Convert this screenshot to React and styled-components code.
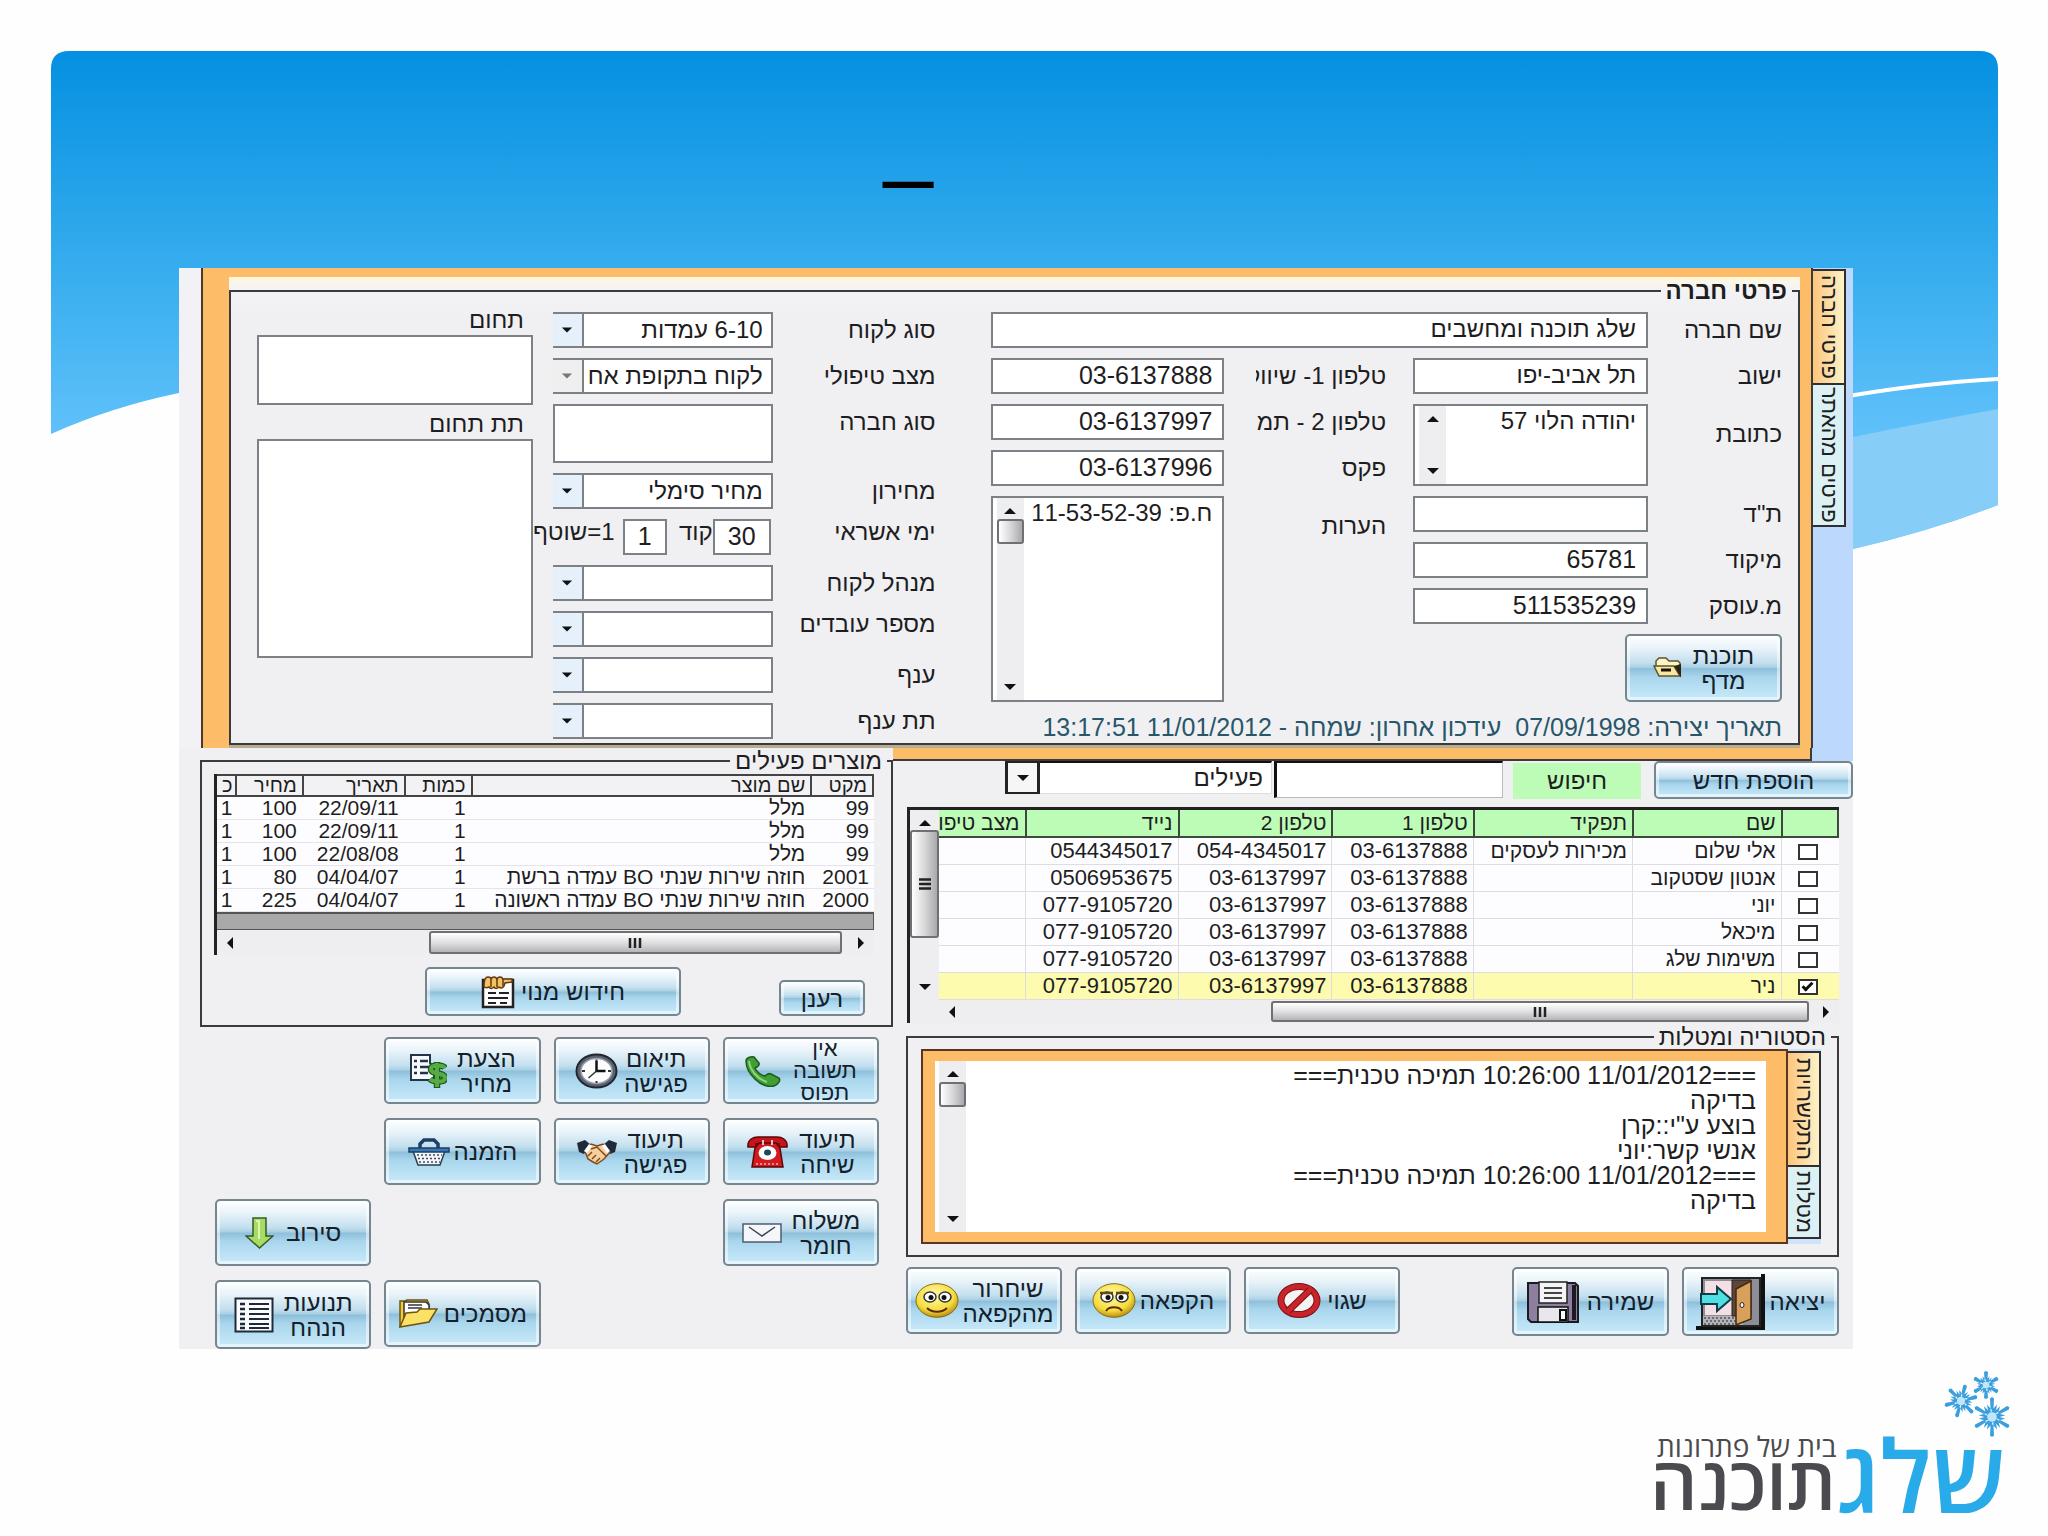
import React from "react";
import styled, { createGlobalStyle, css } from "styled-components";

const ink = "#1d1d22";
const line = "#7c8186";
const orange = "#fdbd68";
const face = "#f0f0f2";
const sans = '"Liberation Sans", Arial, sans-serif';

const GlobalStyle = createGlobalStyle`
  *, *::before, *::after { box-sizing: border-box; }
  body { margin: 0; background: #fefefe; color: ${ink}; font-family: ${sans}; }
  button, input, select, textarea { font: inherit; color: inherit; margin: 0; }
`;

/* ---------- slide ---------- */

const Slide = styled.div`
  display: grid;
  grid-template-columns: minmax(0, 1fr);
  min-height: 100vh;
`;

const Backdrop = styled.svg`
  grid-area: 1 / 1;
  width: calc(100% - 101px);
  height: 498px;
  margin: 51px 50px 0 51px;
`;

const Content = styled.div`
  grid-area: 1 / 1;
  display: flex;
  flex-direction: column;
`;

const Title = styled.h1`
  margin: 0;
  height: 268px;
  padding: 124px 232px 0 0;
  font-size: 92px;
  line-height: 104px;
  font-weight: 400;
  color: #000;
  text-align: center;
`;

const AppWindow = styled.main`
  margin: 0 195px 0 179px;
  background: ${face};
  font-size: 24px;
`;

/* ---------- shared controls ---------- */

const boxed = css`
  width: 100%;
  height: 100%;
  border: 2px solid ${line};
  border-radius: 0;
  background: #fff;
  outline: 0;
`;

const TextBox = styled.input`
  ${boxed}
  min-width: 0;
  padding: 0 10px 2px;
  font-size: ${(p) => (p.$digits ? 25 : 24)}px;
  text-align: ${(p) => p.$align || "start"};
`;

const TextArea = styled.textarea`
  ${boxed}
  display: block;
  min-width: 0;
  padding: 2px 10px 2px 0;
  font-size: ${(p) => (p.$digits ? 25 : 24)}px;
  line-height: ${(p) => p.$leading || 26}px;
  white-space: pre;
  resize: none;
  overflow: hidden;
  ${(p) => p.$bare && "border: 0;"}
`;

const Label = styled.label`
  display: block;
  min-width: 0;
  overflow: hidden;
  white-space: nowrap;
  line-height: ${(p) => (p.$snug ? 26 : 36)}px;
  padding-top: ${(p) => (p.$tall ? 12 : 0)}px;
  ${(p) => p.$inset && "margin: 0 27px 0 32px;"}
`;

const Cell = styled.div`
  grid-row: span ${(p) => p.$rows || 1};
  grid-column: span ${(p) => p.$cols || 1};
  min-width: 0;
  display: grid;
`;

const ComboFrame = styled.div`
  display: grid;
  grid-template-columns: minmax(0, 1fr);
  height: 100%;
`;

const ComboSelect = styled.select`
  ${boxed}
  grid-area: 1 / 1;
  appearance: none;
  border-left: 0;
  padding: 0 8px 2px 32px;
  opacity: 1;
`;

const ComboArrow = styled.span`
  grid-area: 1 / 1;
  justify-self: end;
  width: 31px;
  display: flex;
  align-items: center;
  justify-content: center;
  border: 2px solid ${line};
  border-left: 0;
  background: ${(p) => (p.$dim ? "#efeff0" : "#e6f0fa")};
  color: ${(p) => (p.$dim ? "#777" : "#111")};
  pointer-events: none;
`;

const FilterArrow = styled(ComboArrow)`
  width: 35px;
  border: solid #222;
  border-width: 2px 3px;
  background: #f6f6f6;
`;

const FilterSelect = styled(ComboSelect)`
  border: solid #ddd;
  border-width: 2px 1px 1px;
  border-top-color: #111;
  padding-left: 38px;
`;

const Arrow = ({ dir = "down", size = 14 }) => {
  const pts = { down: "1,4 13,4 7,10", up: "1,10 13,10 7,4", left: "10,1 10,13 4,7", right: "4,1 4,13 10,7" }[dir];
  return (
    <svg width={size} height={size} viewBox="0 0 14 14" aria-hidden="true">
      <polygon points={pts} fill="currentColor" />
    </svg>
  );
};

const Combo = ({ id, value, dim }) => (
  <ComboFrame>
    <ComboSelect id={id} disabled={dim} defaultValue={value}>
      <option>{value}</option>
    </ComboSelect>
    <ComboArrow $dim={dim}>
      <Arrow size={12} />
    </ComboArrow>
  </ComboFrame>
);

const GlossButton = styled.button`
  display: flex;
  align-items: center;
  justify-content: center;
  gap: ${(p) => p.$gap || 6}px;
  width: ${(p) => (p.$w ? p.$w + "px" : "100%")};
  height: ${(p) => (p.$h ? p.$h + "px" : "100%")};
  padding: 0 4px;
  overflow: hidden;
  border: 2px solid #76868f;
  border-radius: 5px;
  background: linear-gradient(#fdfeff 0%, #eaf4fa 18%, #c3dfee 42%, #a9d0e5 49%, #8ebfda 51%, #a9d6ed 64%, #c9eafa 100%);
  box-shadow: inset 0 0 0 3px rgba(255, 255, 255, 0.5);
  font-size: ${(p) => (p.$tight ? 22 : 24)}px;
  line-height: ${(p) => (p.$tight ? 22 : 25)}px;
  white-space: pre-line;
  color: #14202a;
  svg { flex: none; }
`;

const GroupBox = styled.fieldset`
  min-width: 0;
  margin: 0;
  border: 2px solid #3b3b3d;
  padding: 0;
`;

const GroupTitle = styled.legend`
  margin-inline-start: ${(p) => p.$start || 6}px;
  padding: 0 5px;
  font-size: 24px;
  font-weight: ${(p) => (p.$bold ? 700 : 400)};
  line-height: ${(p) => p.$leading || 26}px;
`;

/* ---------- scroll bars ---------- */

const Track = styled.div`
  display: flex;
  flex-direction: ${(p) => (p.$vertical ? "column" : "row")};
  direction: ltr;
  align-items: center;
  min-width: 0;
  padding: ${(p) => (p.$vertical ? "6px 0" : "0 6px")};
  background: #eeeef0;
  color: #111;
  svg { flex: none; display: block; }
`;

const Gap = styled.i`
  flex: ${(p) => p.$grow} 1 0;
`;

const Thumb = styled.i`
  display: flex;
  align-items: center;
  justify-content: center;
  border: 2px solid #707074;
  border-radius: 3px;
  ${(p) =>
    p.$vertical
      ? css`
          width: 100%;
          flex: ${p.$grow} 1 0;
          background: linear-gradient(90deg, #fff, #d8d8da 50%, #a9a9ad);
        `
      : css`
          height: calc(100% - 2px);
          flex: ${p.$grow} 1 0;
          background: linear-gradient(#fff, #e2e2e4 48%, #b5b5b8);
        `}
`;

const Grip = ({ vertical }) => (
  <svg width="14" height="12" viewBox="0 0 14 12" aria-hidden="true">
    <path d={vertical ? "M1 1.500h12M1 6h12M1 10.500h12" : "M2 1v10M7 1v10M12 1v10"} stroke="#222" strokeWidth="2.500" />
  </svg>
);

const ScrollBar = ({ vertical, before, size, after, grip }) => (
  <Track $vertical={vertical} aria-hidden="true">
    <Arrow dir={vertical ? "up" : "left"} />
    <Gap $grow={before} />
    {size > 0 && (
      <Thumb $vertical={vertical} $grow={size}>
        {grip && <Grip vertical={vertical} />}
      </Thumb>
    )}
    <Gap $grow={after} />
    <Arrow dir={vertical ? "down" : "right"} />
  </Track>
);

const ScrollField = styled.div`
  display: grid;
  grid-template-columns: minmax(0, 1fr) 27px;
  padding-left: 4px;
  border: ${(p) => (p.$bare ? 0 : 2)}px solid ${line};
  background: #fff;
`;

/* ---------- company panel ---------- */

const CompanyPanel = styled.section`
  display: flex;
  background: #f2f1f6;
  padding-left: 22px;
`;

const TabRail = styled.div`
  flex: none;
  width: ${(p) => p.$w}px;
  display: flex;
  flex-direction: column;
  padding: ${(p) => p.$pad};
  background: ${(p) => p.$bg};
  ${(p) => p.$ruled && "border-left: 2px solid #3b3b3d;"}
`;

const Tab = styled.button`
  writing-mode: vertical-rl;
  direction: rtl;
  display: flex;
  align-items: center;
  justify-content: center;
  height: ${(p) => p.$h}px;
  width: 100%;
  padding: 0;
  border: solid #2f2f33;
  border-width: 2px 2px 0 0;
  background: ${(p) => (p.$on ? "linear-gradient(90deg, #fcc57c, #fdf3c8)" : "#dcf1f3")};
  font-size: 22px;
  line-height: 26px;
  &:last-child { border-bottom-width: 2px; }
`;

const OrangeFrame = styled.div`
  flex: 1;
  min-width: 0;
  padding: 9px 11px 0 26px;
  border-left: 2px solid #4a3a2a;
  background: ${orange};
`;

const Sheet = styled.div`
  background: linear-gradient(#fff8dc, #f3f3f6 12px, ${face} 40px);
  box-shadow: 0 3px 0 #b9ad8f;
  margin-bottom: 3px;
`;

const CompanyColumns = styled.div`
  display: grid;
  grid-template-columns: minmax(0, 792fr) minmax(0, 438fr) minmax(0, 296fr);
  padding: 0 16px 0 26px;
`;

const ContactBlock = styled.div`
  padding-top: 7px;
`;

const ContactGrid = styled.div`
  display: grid;
  grid-template-columns: minmax(0, 134fr) minmax(0, 235fr) minmax(0, 189fr) minmax(0, 234fr);
  grid-template-rows: repeat(7, 36px) 68px;
  row-gap: 10px;
`;

const Status = styled.p`
  margin: 9px 0 0;
  font-size: 25px;
  line-height: 32px;
  color: #28566a;
  white-space: pre;
`;

const DetailGrid = styled.div`
  display: grid;
  grid-template-columns: minmax(0, 163fr) minmax(0, 220fr);
  grid-template-rows: 36px 36px 59px repeat(6, 36px);
  row-gap: 10px;
  padding-top: 7px;
  margin-inline-start: 55px;
`;

const CreditRow = styled.div`
  display: flex;
  gap: 0;
  padding-inline-start: 2px;
  white-space: nowrap;
`;

const SmallBox = styled.div`
  flex: none;
  width: ${(p) => p.$w}px;
  margin-inline-end: ${(p) => p.$after || 0}px;
`;

const CreditLabel = styled(Label)`
  flex: none;
  width: ${(p) => (p.$w ? p.$w + "px" : "auto")};
`;

const DomainColumn = styled.div`
  margin-inline-start: 20px;
  label { line-height: 30px; padding-inline-start: 9px; }
`;

const DomainBox = styled.div`
  height: ${(p) => p.$h}px;
  margin-bottom: 4px;
`;

/* ---------- lower body ---------- */

const Body = styled.div`
  display: grid;
  grid-template-columns: minmax(0, 960fr) minmax(0, 714fr);
`;

const Strip = styled.div`
  display: flex;
  height: 13px;
  background: #bcd9fd;
  &::before {
    content: "";
    width: 41px;
  }
  &::after {
    content: "";
    flex: 1;
    background: ${orange};
    border: solid #3b3b3d;
    border-width: 0 2px 2px 0;
  }
`;

const FilterRow = styled.div`
  display: flex;
  height: 38px;
`;

const SearchButton = styled.button`
  width: 128px;
  height: 36px;
  margin: 2px 13px 0 10px;
  border: 0;
  background: #bdfcb6;
  font-size: 24px;
`;

const SearchBox = styled.input`
  flex: none;
  width: 229px;
  height: 37px;
  margin-left: 2px;
  border: solid #bbb;
  border-width: 2px 1px 1px 3px;
  border-color: #111 #bbb #bbb #111;
  background: #fff;
`;

const FilterCombo = styled.div`
  width: 267px;
  height: 33px;
`;

const PeopleFrame = styled.div`
  display: grid;
  grid-template-columns: minmax(0, 1fr) 29px;
  grid-template-rows: auto 23px;
  margin: 8px 14px 0;
  border-top: 3px solid #222;
  border-left: 3px solid #222;
  background: #eeeef0;
`;

const PeopleTable = styled.table`
  width: 100%;
  table-layout: fixed;
  border-collapse: separate;
  border-spacing: 0;
  font-size: 22px;
  th, td {
    padding: 0 5px 0 0;
    text-align: start;
    font-weight: 400;
    white-space: nowrap;
    overflow: hidden;
  }
  th {
    height: 28px;
    line-height: 26px;
    font-size: 21px;
    background: #bdfcb6;
    border: solid #3c4a3c;
    border-width: 0 0 2px 2px;
  }
  th:last-child, td:last-child { border-left: 0; }
  th:first-child { border-right: 2px solid #3c4a3c; }
  td {
    height: 27px;
    line-height: 26px;
    border: solid #dcdce2;
    border-width: 0 0 1px 1px;
    background: #fdfdff;
  }
  td:nth-child(2), td:nth-child(3) { font-size: 21px; }
  tr[aria-selected="true"] td { background: #fcfbae; }
`;

const PickCell = styled.td`
  text-align: center !important;
`;

const Tick = styled.input`
  appearance: none;
  display: inline-grid;
  place-items: center;
  width: 20px;
  height: 16px;
  border: 2px solid #333;
  background: #fff;
  vertical-align: middle;
  &:checked::before {
    content: "";
    width: 11px;
    height: 6px;
    border: solid #111;
    border-width: 0 0 3px 3px;
    transform: rotate(-45deg) translate(1px, -1px);
  }
`;

const HistoryGroup = styled(GroupBox)`
  margin: 2px 14px 0 13px;
`;

const HistoryRow = styled.div`
  display: flex;
  padding: 0 16px 11px 13px;
`;

const HistoryFrame = styled.div`
  flex: 1;
  min-width: 0;
  display: grid;
  height: 195px;
  padding: 10px 20px 10px 12px;
  border: 2px solid #5a3524;
  background: ${orange};
`;

const BottomButtons = styled.div`
  display: flex;
  gap: 13px;
  margin: 10px 14px 11px 13px;
  height: 69px;
`;

const Push = styled.span`
  flex: 1;
`;

const ProductsGroup = styled(GroupBox)`
  margin-left: 21px;
`;

const ProductsFrame = styled.div`
  margin: 0 17px 0 12px;
  border-left: 3px solid #222;
`;

const ProductsTable = styled.table`
  width: 100%;
  table-layout: fixed;
  border-collapse: separate;
  border-spacing: 0;
  font-size: 21px;
  th, td {
    padding: 0 5px;
    text-align: start;
    font-weight: 400;
    white-space: nowrap;
    overflow: hidden;
  }
  th {
    height: 23px;
    line-height: 19px;
    font-size: 20px;
    background: #f2f2f4;
    border: solid #444;
    border-width: 2px 0 2px 2px;
  }
  th:first-child { border-right: 2px solid #444; }
  th:last-child { border-left: 0; }
  td {
    height: 23px;
    line-height: 22px;
    background: #fdfdff;
    border-bottom: 1px solid #e4e4ea;
  }
  th:last-child, td:last-child { padding: 0 3px; }
`;

const EmptyBand = styled.div`
  height: 18px;
  border: 2px solid #555;
  border-width: 2px 1px 1px 0;
  background: #a9a9a9;
`;

const HBar = styled.div`
  display: grid;
  height: ${(p) => p.$h}px;
`;

const ProductButtons = styled.div`
  display: flex;
  align-items: flex-end;
  gap: 98px;
  padding: 12px 26px 9px;
`;

const ActionGrid = styled.div`
  display: grid;
  grid-template-columns: repeat(4, minmax(0, 1fr));
  grid-template-rows: 67px 67px 67px 69px;
  gap: 14px 13px;
  margin: 10px 14px 0 36px;
`;

const ActionSlot = styled.div`
  grid-column: ${(p) => p.$col};
  grid-row: ${(p) => p.$row};
`;

/* ---------- logo ---------- */

const Footer = styled.footer`
  display: flex;
  justify-content: flex-end;
  margin-top: auto;
  padding: 0 42px 16px 0;
`;

const Logo = styled.div`
  position: relative;
  display: flex;
  align-items: flex-end;
  direction: rtl;
  font-family: "Open Sans", ${sans};
`;

const LogoBlue = styled.span`
  font-size: 100px;
  line-height: 92px;
  font-weight: 600;
  color: #29abe9;
`;

const LogoStack = styled.span`
  display: flex;
  flex-direction: column;
  padding-bottom: 13px;
  color: #4b4a4e;
`;

const LogoSmall = styled.span`
  font-size: 28px;
  line-height: 22px;
`;

const LogoGray = styled.span`
  font-size: 74px;
  line-height: 50px;
  font-weight: 600;
`;

const Flakes = styled.svg`
  position: absolute;
  top: -58px;
  right: -6px;
`;

/* ---------- icons ---------- */

const Svg = ({ w = 40, h = 40, box = "0 0 40 40", children }) => (
  <svg width={w} height={h} viewBox={box} fill="none" aria-hidden="true">
    {children}
  </svg>
);

const FolderSmall = () => (
  <Svg w={30} h={22} box="0 0 30 22">
    <path d="M3 9V4l3-3h7l3 3h9l2 2v13l-3-2" fill="#fdf6c4" stroke="#5d5330" strokeWidth="1.5" />
    <path d="M1 9h20l6 10H6z" fill="#f7e7a0" stroke="#5d5330" strokeWidth="1.5" />
    <path d="M8 13h10" stroke="#1d1409" strokeWidth="3" />
    <path d="M21 9l7 11V7z" fill="#2b2413" />
  </Svg>
);

const Phone = () => (
  <Svg w={36} h={32} box="0 0 36 32">
    <path d="M1 6C1 3 6 1 9 2l5 6c1 3-2 4-4 5 2 4 5 7 10 8 2-2 4-3 6-2l8 4c2 2-1 7-5 8C16 34 1 18 1 6z" fill="#3f9f35" stroke="#1f5a1e" strokeWidth="1.500" />
    <path d="M4 6c1 9 8 18 18 21" stroke="#8fd57e" strokeWidth="2" />
  </Svg>
);

const Clock = () => (
  <Svg w={43} h={36} box="0 0 43 36">
    <ellipse cx="21.500" cy="18" rx="20" ry="16.500" fill="#5b626f" stroke="#23262e" strokeWidth="2" />
    <ellipse cx="21.500" cy="18" rx="15.500" ry="12.500" fill="#fdfdfd" stroke="#9aa2b0" strokeWidth="1.500" />
    <path d="M21.500 8v10h9" stroke="#111" strokeWidth="2.500" />
    <path d="M21.500 18l-8 7" stroke="#333" strokeWidth="1.500" />
    <path d="M21.500 6.500v2M21.500 28v2M7 18h3M33 18h3" stroke="#333" strokeWidth="2" />
  </Svg>
);

const Quote = () => (
  <Svg w={38} h={36} box="0 0 38 36">
    <path d="M2 2h19v8l4 4v13H2z" fill="#f7fafc" stroke="#26344a" strokeWidth="2" />
    <path d="M5 8h3M5 14h3M5 20h3M11 8h8M11 14h10M11 20h8" stroke="#26344a" strokeWidth="2.500" />
    <path d="M28 9v26M36 15c-2-3-14-4-14 1 0 6 14 3 14 9 0 5-12 4-15 1" stroke="#1e5c1c" strokeWidth="6.500" />
    <path d="M28 10v24M36 15c-2-3-14-4-14 1 0 6 14 3 14 9 0 5-12 4-15 1" stroke="#57ab45" strokeWidth="4" />
  </Svg>
);

const RedPhone = () => (
  <Svg w={43} h={32} box="0 0 43 32">
    <path d="M2 11C1 3 8 1 12 1h19c4 0 11 2 10 10h-8V8H10v3z" fill="#c5161b" stroke="#5e0508" strokeWidth="1.500" />
    <path d="M9 12l4-5h17l4 5 3 19H6z" fill="#d2191f" stroke="#5e0508" strokeWidth="1.500" />
    <ellipse cx="21.500" cy="17" rx="9" ry="7" fill="#fff" />
    <ellipse cx="21.500" cy="16.500" rx="3.500" ry="3" fill="#1b4a57" />
    <path d="M10 28h23" stroke="#f6b3b3" strokeWidth="1.500" strokeDasharray="2 2" />
    <path d="M17 4v5M26 4v5" stroke="#fff" strokeWidth="1.500" />
  </Svg>
);

const Handshake = () => (
  <Svg w={42} h={26} box="0 0 42 26">
    <path d="M1 4l8-3 6 5-7 9-5-2z" fill="#1f2a3a" />
    <path d="M41 4l-8-3-6 5 7 9 5-2z" fill="#1f2a3a" />
    <path d="M9 12l6-7 6 2 6-2 7 8-6 7-7 5-4-2-5-3z" fill="#f7cf9d" stroke="#7a4a22" strokeWidth="1.500" />
    <path d="M15 10l6-2 9 9M12 17l4-4M16 20l4-4M20 23l4-4" stroke="#7a4a22" strokeWidth="1.500" />
    <path d="M13 5l3 2-5 7-3-2zM29 5l-3 2 5 7 3-2z" fill="#fff" />
  </Svg>
);

const Basket = () => (
  <Svg w={42} h={28} box="0 0 42 28">
    <path d="M12 10V6l4-4h10l4 4v4" stroke="#1d3e66" strokeWidth="3.500" />
    <path d="M5 13h32l-5 14H10z" fill="#f2f5f8" stroke="#2b3c50" strokeWidth="1.500" />
    <path d="M1 10h40v4H1z" fill="#3978b4" stroke="#1d3e66" strokeWidth="1.500" />
    <path d="M9 17h25M10 20.500h23M11 24h21" stroke="#40505f" strokeWidth="1.500" strokeDasharray="2 2" />
  </Svg>
);

const Envelope = () => (
  <Svg w={40} h={20} box="0 0 40 20">
    <path d="M1 1h38v18H1z" fill="#f4f6fa" stroke="#4d5c70" strokeWidth="1.500" />
    <path d="M7 4l13 9 13-9" stroke="#3d4656" strokeWidth="1.500" />
  </Svg>
);

const DownArrow = () => (
  <Svg w={29} h={32} box="0 0 29 32">
    <path d="M8 1h13v18h7L14.500 31 1 19h7z" fill="#a6dc62" stroke="#36592a" strokeWidth="1.500" />
    <path d="M11 4h3v18" stroke="#def5b6" strokeWidth="2" />
  </Svg>
);

const ListSheet = () => (
  <Svg w={40} h={36} box="0 0 40 36">
    <path d="M1.500 1.500h37v33h-37z" fill="#fafcfd" stroke="#1e2a3a" strokeWidth="2" />
    <path d="M15 7h20M15 12h20M15 17h20M15 22h20M15 27h20M15 31h20" stroke="#1e2a3a" strokeWidth="2" />
    <path d="M6 7h5M6 12h5M6 17h5M6 22h5M6 27h5M6 31h5" stroke="#1e2a3a" strokeWidth="2.500" />
  </Svg>
);

const Docs = () => (
  <Svg w={40} h={30} box="0 0 40 30">
    <path d="M2 28V2h5l2-1h20l2 4v10" fill="#f4cd3c" stroke="#6b5410" strokeWidth="1.500" />
    <path d="M6 3h22l3 3v14H6z" fill="#fff" stroke="#333" strokeWidth="1.500" />
    <path d="M10 6h14M10 9h14" stroke="#333" strokeWidth="1.500" />
    <path d="M2 28l6-14 11-1 3-3h17l-8 13z" fill="#fbe267" stroke="#6b5410" strokeWidth="1.500" />
  </Svg>
);

const Notepad = () => (
  <Svg w={34} h={34} box="0 0 34 34">
    <path d="M2 5h30v27H2z" fill="#fff" stroke="#222" strokeWidth="2.500" />
    <path d="M7 18h8M18 18h10M7 23h20M7 28h8M19 28h7" stroke="#222" strokeWidth="2" />
    <path d="M3 11c0-6 1-9 4-9s3 2 3 2 1-2 3-2 3 2 3 2 1-2 3-2 3 2 3 2h9v3l-7 1-1 3c-2 3-4 2-5 1-2 2-4 2-5 0-2 2-4 2-5 0-2 1-5 1-5-1z" fill="#f6c163" stroke="#5d3b12" strokeWidth="1.500" />
    <path d="M10 4v8M16 4v8M22 4v7" stroke="#5d3b12" strokeWidth="1.500" />
  </Svg>
);

const Face = ({ sad }) => (
  <Svg w={44} h={35} box="0 0 44 35">
    <defs>
      <radialGradient id={sad ? "glowSad" : "glowGlad"} cx="0.45" cy="0.35" r="0.65">
        <stop offset="0" stopColor="#fffbb0" />
        <stop offset="0.7" stopColor="#f6dc3c" />
        <stop offset="1" stopColor="#b98f14" />
      </radialGradient>
    </defs>
    <ellipse cx="22" cy="17.500" rx="21" ry="16.800" fill={`url(#${sad ? "glowSad" : "glowGlad"})`} stroke="#8a6b12" />
    <ellipse cx="15" cy="14" rx="6" ry="5" fill="#fff" stroke="#333" strokeWidth="1.500" />
    <ellipse cx="30" cy="14" rx="6" ry="5" fill="#fff" stroke="#333" strokeWidth="1.500" />
    <ellipse cx="16" cy="14.500" rx="2.500" ry="2.500" fill="#111" />
    <ellipse cx="29" cy="14.500" rx="2.500" ry="2.500" fill="#111" />
    {sad && <path d="M8 10h13M24 10h13" stroke="#5d4a10" strokeWidth="2.500" />}
    <path d={sad ? "M14 28c3-5 13-5 16 0" : "M12 25c5 5 15 5 20 0"} stroke="#5d2b08" strokeWidth="2" />
  </Svg>
);

const NoEntry = () => (
  <Svg w={44} h={35} box="0 0 44 35">
    <ellipse cx="22" cy="17.500" rx="18" ry="14" fill="#f6f3f3" stroke="#7d1116" strokeWidth="7" />
    <ellipse cx="22" cy="17.500" rx="18" ry="14" stroke="#c9242b" strokeWidth="5" />
    <path d="M33 7L11 28" stroke="#7d1116" strokeWidth="7" />
    <path d="M34 6L10 29" stroke="#c9242b" strokeWidth="5" />
  </Svg>
);

const Floppy = () => (
  <Svg w={52} h={42} box="0 0 52 42">
    <path d="M2 2h46l3 3v36H4l-3-3V2z" fill="#8d7f9f" stroke="#1a1a20" strokeWidth="2" />
    <path d="M12 1h28v21H12z" fill="#f4f4f6" stroke="#222" strokeWidth="1.500" />
    <path d="M17 7h18M17 12h18M17 17h18" stroke="#444" strokeWidth="2" />
    <path d="M11 26h30v15H11z" fill="#e8e8ec" stroke="#111" strokeWidth="1.500" />
    <path d="M33 29h6v10h-6z" fill="#fff" stroke="#111" strokeWidth="2" />
    <path d="M47 4v35" stroke="#1a1a20" strokeWidth="4" />
  </Svg>
);

const ExitDoor = () => (
  <Svg w={70} h={56} box="0 0 70 56">
    <path d="M0 54h67V0" stroke="#111" strokeWidth="4" />
    <path d="M6 4h58v48H6z" fill="#8e8e96" stroke="#222" strokeWidth="2" />
    <path d="M9 7h30v34H9z" fill="#f3dfe4" />
    <path d="M7 42h40v9H7z" fill="#b3b3bb" />
    <path d="M8 44h36M10 47h34M8 50h36" stroke="#555" strokeWidth="1.500" strokeDasharray="2 2" />
    <path d="M36 6h19v36H36z" fill="#5d4638" stroke="#222" />
    <path d="M40 15l15-8v38l-15 6z" fill="#d9a05c" stroke="#442a10" strokeWidth="1.500" />
    <ellipse cx="46" cy="31" rx="2" ry="2.500" fill="#fff" stroke="#222" />
    <path d="M5 20h16v-7l14 12-14 12v-7H5z" fill="#4fe0e4" stroke="#123c48" strokeWidth="2" />
  </Svg>
);

const Flake = ({ x, y, r, turn = 0 }) => (
  <g transform={`translate(${x} ${y}) rotate(${turn})`} fill="#3b9fdc">
    {[0, 60, 120, 180, 240, 300].map((a) => (
      <path key={a} transform={`rotate(${a})`} d={`M-1 0L-2 ${-r * 0.92}L0 ${-r}L2 ${-r * 0.92}L1 0ZM0 ${-r * 0.35}L${r * 0.26} ${-r * 0.62}L${r * 0.12} 0ZM0 ${-r * 0.35}L${-r * 0.26} ${-r * 0.62}L${-r * 0.12} 0Z`} />
    ))}
    <circle r={r * 0.24} fill="#bfe6fa" />
  </g>
);

/* ---------- data ---------- */

const people = [
  ["אלי שלום", "מכירות לעסקים", "03-6137888", "054-4345017", "0544345017"],
  ["אנטון שסטקוב", "", "03-6137888", "03-6137997", "0506953675"],
  ["יוני", "", "03-6137888", "03-6137997", "077-9105720"],
  ["מיכאל", "", "03-6137888", "03-6137997", "077-9105720"],
  ["משימות שלג", "", "03-6137888", "03-6137997", "077-9105720"],
  ["ניר", "", "03-6137888", "03-6137997", "077-9105720"],
];
const peopleHeads = ["", "שם", "תפקיד", "טלפון 1", "טלפון 2", "נייד", "מצב טיפו"];
const peopleWidths = ["6.5%", "16.5%", "17.7%", "15.7%", "17.1%", "17%", "9.5%"];

const products = [
  ["99", "מלל", "1", "22/09/11", "100", "1"],
  ["99", "מלל", "1", "22/09/11", "100", "1"],
  ["99", "מלל", "1", "22/08/08", "100", "1"],
  ["2001", "חוזה שירות שנתי BO עמדה ברשת", "1", "04/04/07", "80", "1"],
  ["2000", "חוזה שירות שנתי BO עמדה ראשונה", "1", "04/04/07", "225", "1"],
];
const productHeads = ["מקט", "שם מוצר", "כמות", "תאריך", "מחיר", "כ"];
const productWidths = ["9.7%", "51.7%", "10.2%", "15.5%", "10.1%", "2.8%"];

const history = [
  "===11/01/2012 10:26:00 תמיכה טכנית===",
  "בדיקה",
  'בוצע ע"י::קרן',
  "אנשי קשר:יוני",
  "===11/01/2012 10:26:00 תמיכה טכנית===",
  "בדיקה",
].join("\n");

const actions = [
  { col: 1, row: 1, text: "אין\nתשובה\nתפוס", icon: <Phone />, gap: 12, tight: true },
  { col: 2, row: 1, text: "תיאום\nפגישה", icon: <Clock /> },
  { col: 3, row: 1, text: "הצעת\nמחיר", icon: <Quote />, gap: 10 },
  { col: 1, row: 2, text: "תיעוד\nשיחה", icon: <RedPhone />, gap: 10 },
  { col: 2, row: 2, text: "תיעוד\nפגישה", icon: <Handshake /> },
  { col: 3, row: 2, text: "הזמנה", icon: <Basket />, gap: 4 },
  { col: 1, row: 3, text: "משלוח\nחומר", icon: <Envelope />, gap: 10 },
  { col: 4, row: 3, text: "סירוב", icon: <DownArrow />, gap: 12 },
  { col: 3, row: 4, h: 67, text: "מסמכים", icon: <Docs /> },
  { col: 4, row: 4, text: "תנועות\nהנהח", icon: <ListSheet />, gap: 10 },
];

/* ---------- sections ---------- */

const Company = () => (
  <CompanyPanel>
    <TabRail $w={42} $pad="1px 7px 0 0" $bg="#bcd9fd" $ruled>
      <Tab type="button" $h={114} $on>פרטי חברה</Tab>
      <Tab type="button" $h={144}>פרטים מהאתר</Tab>
    </TabRail>
    <OrangeFrame>
      <Sheet>
        <GroupBox>
          <GroupTitle $bold $leading={28}>פרטי חברה</GroupTitle>
          <CompanyColumns>
            <ContactBlock>
              <ContactGrid>
                <Label htmlFor="name">שם חברה</Label>
                <Cell $cols={3}><TextBox id="name" defaultValue="שלג תוכנה ומחשבים" /></Cell>

                <Label htmlFor="city">ישוב</Label>
                <Cell><TextBox id="city" defaultValue="תל אביב-יפו" /></Cell>
                <Label htmlFor="tel1" $inset>טלפון 1- שיווק</Label>
                <Cell><TextBox id="tel1" $digits defaultValue="03-6137888" /></Cell>

                <Cell $rows={2}><Label htmlFor="street" $tall>כתובת</Label></Cell>
                <Cell $rows={2}>
                  <ScrollField>
                    <TextArea id="street" $bare defaultValue="יהודה הלוי 57" />
                    <ScrollBar vertical before={1} size={0} after={1} />
                  </ScrollField>
                </Cell>
                <Label htmlFor="tel2" $inset>טלפון 2 - תמ</Label>
                <Cell><TextBox id="tel2" $digits defaultValue="03-6137997" /></Cell>
                <Label htmlFor="fax" $inset>פקס</Label>
                <Cell><TextBox id="fax" $digits defaultValue="03-6137996" /></Cell>

                <Label htmlFor="pob">ת"ד</Label>
                <Cell><TextBox id="pob" /></Cell>
                <Cell $rows={4}><Label htmlFor="notes" $inset $tall>הערות</Label></Cell>
                <Cell $rows={4}>
                  <ScrollField>
                    <TextArea id="notes" $bare defaultValue="ח.פ: 11-53-52-39" />
                    <ScrollBar vertical before={1} size={18} after={120} />
                  </ScrollField>
                </Cell>

                <Label htmlFor="zip">מיקוד</Label>
                <Cell><TextBox id="zip" $digits defaultValue="65781" /></Cell>
                <Label htmlFor="tax">מ.עוסק</Label>
                <Cell><TextBox id="tax" $digits defaultValue="511535239" /></Cell>

                <Cell $cols={2}>
                  <GlossButton type="button" $w={157} $gap={10}>
                    {"תוכנת\nמדף"}
                    <FolderSmall />
                  </GlossButton>
                </Cell>
              </ContactGrid>
              <Status>{"תאריך יצירה: 07/09/1998  עידכון אחרון: שמחה - 11/01/2012 13:17:51"}</Status>
            </ContactBlock>

            <DetailGrid>
              <Label htmlFor="kind">סוג לקוח</Label>
              <Combo id="kind" value="6-10 עמדות" />
              <Label htmlFor="state">מצב טיפולי</Label>
              <Combo id="state" value="לקוח בתקופת אח" dim />
              <Label htmlFor="firm">סוג חברה</Label>
              <Cell><TextArea id="firm" /></Cell>
              <Label htmlFor="price">מחירון</Label>
              <Combo id="price" value="מחיר סימלי" />
              <Label htmlFor="days" $snug>ימי אשראי</Label>
              <CreditRow>
                <SmallBox $w={58}><TextBox id="days" defaultValue="30" $digits $align="center" /></SmallBox>
                <CreditLabel htmlFor="code" $snug $w={46}>קוד</CreditLabel>
                <SmallBox $w={44} $after={8}><TextBox id="code" defaultValue="1" $digits $align="center" /></SmallBox>
                <CreditLabel as="span" $snug>1=שוטף</CreditLabel>
              </CreditRow>
              <Label htmlFor="manager">מנהל לקוח</Label>
              <Combo id="manager" value="" />
              <Label htmlFor="staff" $snug>מספר עובדים</Label>
              <Combo id="staff" value="" />
              <Label htmlFor="branch">ענף</Label>
              <Combo id="branch" value="" />
              <Label htmlFor="subbranch">תת ענף</Label>
              <Combo id="subbranch" value="" />
            </DetailGrid>

            <DomainColumn>
              <Label htmlFor="domain">תחום</Label>
              <DomainBox $h={70}><TextArea id="domain" /></DomainBox>
              <Label htmlFor="subdomain">תת תחום</Label>
              <DomainBox $h={219}><TextArea id="subdomain" /></DomainBox>
            </DomainColumn>
          </CompanyColumns>
        </GroupBox>
      </Sheet>
    </OrangeFrame>
  </CompanyPanel>
);

const People = () => (
  <PeopleFrame>
    <PeopleTable>
      <colgroup>{peopleWidths.map((w, i) => <col key={i} style={{ width: w }} />)}</colgroup>
      <thead>
        <tr>{peopleHeads.map((h, i) => <th key={i}>{h}</th>)}</tr>
      </thead>
      <tbody>
        {people.map((row, r) => (
          <tr key={r} aria-selected={r === 5}>
            <PickCell><Tick type="checkbox" aria-label={row[0]} defaultChecked={r === 5} /></PickCell>
            {row.map((v, i) => <td key={i}>{v}</td>)}
            <td />
          </tr>
        ))}
      </tbody>
    </PeopleTable>
    <ScrollBar vertical before={0} size={100} after={40} grip />
    <ScrollBar before={31} size={53} after={1} grip />
  </PeopleFrame>
);

const Products = () => (
  <ProductsGroup>
    <GroupTitle $leading={26} $start={4}>מוצרים פעילים</GroupTitle>
    <ProductsFrame>
      <ProductsTable>
        <colgroup>{productWidths.map((w, i) => <col key={i} style={{ width: w }} />)}</colgroup>
        <thead>
          <tr>{productHeads.map((h) => <th key={h}>{h}</th>)}</tr>
        </thead>
        <tbody>
          {products.map((row, r) => (
            <tr key={r}>{row.map((v, i) => <td key={i}>{v}</td>)}</tr>
          ))}
        </tbody>
      </ProductsTable>
      <EmptyBand />
      <HBar $h={25}><ScrollBar before={192} size={410} after={12} grip /></HBar>
    </ProductsFrame>
    <ProductButtons>
      <GlossButton type="button" $w={86} $h={36}>רענן</GlossButton>
      <GlossButton type="button" $w={256} $h={49}>
        חידוש מנוי
        <Notepad />
      </GlossButton>
    </ProductButtons>
  </ProductsGroup>
);

export default function App() {
  return (
    <>
      <GlobalStyle />
      <Slide>
        <Backdrop viewBox="0 0 1947 498" preserveAspectRatio="none" aria-hidden="true">
          <defs>
            <linearGradient id="sky" x1="0" y1="0" x2="0" y2="1">
              <stop offset="0" stopColor="#0490e1" />
              <stop offset="0.44" stopColor="#37adee" />
              <stop offset="0.77" stopColor="#60c1fa" />
              <stop offset="1" stopColor="#70c6f7" />
            </linearGradient>
          </defs>
          <path d="M0 18Q0 0 18 0H1929Q1947 0 1947 18V454Q1880 480 1802 498H900C600 330 400 300 128 342Q60 356 0 383Z" fill="url(#sky)" />
          <path d="M1802 386Q1870 372 1947 358V454Q1880 480 1802 498Z" fill="#86cdf8" />
          <path d="M1780 348Q1870 332 1947 328" stroke="#fff" strokeWidth="4" fill="none" />
        </Backdrop>
        <Content>
          <Title>–</Title>
          <AppWindow dir="rtl">
            <Company />
            <Body>
              <section>
                <Strip />
                <FilterRow>
                  <GlossButton type="button" $w={199}>הוספת חדש</GlossButton>
                  <SearchButton type="button">חיפוש</SearchButton>
                  <SearchBox aria-label="חיפוש" />
                  <FilterCombo>
                    <ComboFrame>
                      <FilterSelect aria-label="פעילים"><option>פעילים</option></FilterSelect>
                      <FilterArrow><Arrow /></FilterArrow>
                    </ComboFrame>
                  </FilterCombo>
                </FilterRow>
                <People />
                <HistoryGroup>
                  <GroupTitle $leading={24}>הסטוריה ומטלות</GroupTitle>
                  <HistoryRow>
                    <TabRail $w={33} $pad="2px 0 0" $bg="#cfe2fb">
                      <Tab type="button" $h={114} $on>התקשרויות</Tab>
                      <Tab type="button" $h={74}>מטלות</Tab>
                    </TabRail>
                    <HistoryFrame>
                      <ScrollField $bare>
                        <TextArea $bare $digits $leading={25} aria-label="התקשרויות" defaultValue={history} />
                        <ScrollBar vertical before={1} size={20} after={100} />
                      </ScrollField>
                    </HistoryFrame>
                  </HistoryRow>
                </HistoryGroup>
                <BottomButtons>
                  <GlossButton type="button" $w={157} $gap={4}>יציאה<ExitDoor /></GlossButton>
                  <GlossButton type="button" $w={157} $gap={8}>שמירה<Floppy /></GlossButton>
                  <Push />
                  <GlossButton type="button" $w={156} $h={67}>שגוי<NoEntry /></GlossButton>
                  <GlossButton type="button" $w={156} $h={67} $gap={4}>הקפאה<Face sad /></GlossButton>
                  <GlossButton type="button" $w={156} $h={67} $gap={4}>{"שיחרור\nמהקפאה"}<Face /></GlossButton>
                </BottomButtons>
              </section>
              <section>
                <Products />
                <ActionGrid>
                  {actions.map((a) => (
                    <ActionSlot key={a.text} $col={a.col} $row={a.row}>
                      <GlossButton type="button" $h={a.h} $gap={a.gap} $tight={a.tight}>
                        {a.text}
                        {a.icon}
                      </GlossButton>
                    </ActionSlot>
                  ))}
                </ActionGrid>
              </section>
            </Body>
          </AppWindow>
          <Footer>
            <Logo>
              <LogoBlue>שלג</LogoBlue>
              <LogoStack>
                <LogoSmall>בית של פתרונות</LogoSmall>
                <LogoGray>תוכנה</LogoGray>
              </LogoStack>
              <Flakes width="68" height="70" viewBox="0 0 68 70" aria-hidden="true">
                <Flake x={17} y={31} r={17} turn={15} />
                <Flake x={42} y={15} r={14} />
                <Flake x={48} y={47} r={20} />
              </Flakes>
            </Logo>
          </Footer>
        </Content>
      </Slide>
    </>
  );
}
